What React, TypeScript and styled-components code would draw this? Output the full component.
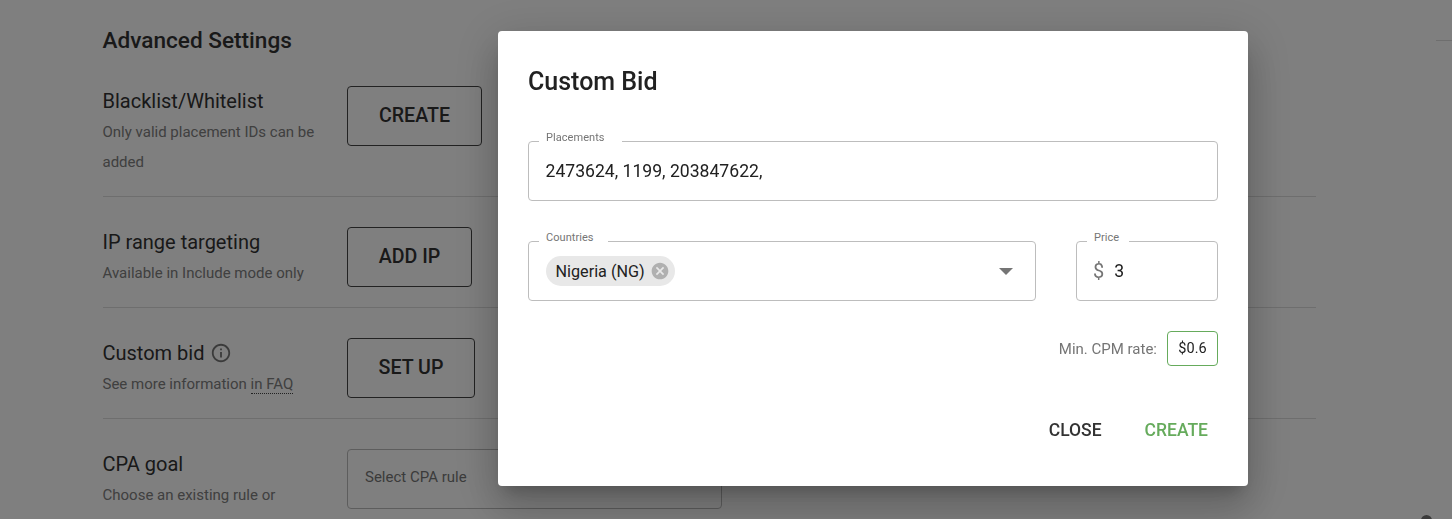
import styled, { createGlobalStyle } from "styled-components";
import { MdCancel, MdInfoOutline } from "react-icons/md";

const Global = createGlobalStyle`
  html, body {
    margin: 0;
    height: 100%;
    overflow: hidden;
    background: #fff;
    font-family: Roboto, "Liberation Sans", sans-serif;
  }
  * { box-sizing: border-box; }
`;

const Page = styled.div`
  height: 519px;
  overflow: hidden;
  padding: 24px 136px 0 102.5px;
`;

const Heading = styled.h2`
  margin: 0;
  font-size: 22.6px;
  font-weight: 500;
  line-height: 34px;
  height: 32px;
  color: #333;
`;

const Row = styled.section`
  display: flex;
  align-items: flex-start;
  padding: 30px 0 20px;
  & + & {
    border-top: 1px solid #ddd;
  }
`;

const RowText = styled.div`
  width: 244.5px;
  flex: none;
  padding-right: 25px;
`;

const RowTitle = styled.div`
  display: flex;
  align-items: center;
  gap: 5px;
  font-size: 20px;
  line-height: 30px;
  color: #333;
`;

const InfoIcon = styled(MdInfoOutline)`
  color: #777;
  font-size: 22px;
`;

const RowHint = styled.div`
  padding-top: 1px;
  margin-bottom: -1px;
  font-size: 15px;
  line-height: 30px;
  color: #808080;
`;

const FaqLink = styled.span`
  border-bottom: 1px dotted #444;
`;

const OutlineButton = styled.button<{ $width: number }>`
  width: ${p => p.$width}px;
  height: 60px;
  padding: 0 0 2px;
  background: transparent;
  border: 1px solid #444;
  border-radius: 4px;
  font: 500 19.6px Roboto, sans-serif;
  color: #333;
`;

const SelectBox = styled.div`
  display: flex;
  align-items: center;
  width: 375px;
  height: 60px;
  padding: 0 17px 4px;
  border: 1px solid #bbb;
  border-radius: 4px;
  font-size: 15px;
  color: #777;
`;

const EdgeLine = styled.div`
  position: absolute;
  top: 40px;
  right: 0;
  width: 16px;
  height: 1px;
  background: #ddd;
`;

const EdgeDot = styled.div`
  position: absolute;
  top: 515px;
  left: 1421px;
  width: 11px;
  height: 11px;
  border-radius: 50%;
  background: #777;
`;

const Backdrop = styled.div`
  position: fixed;
  inset: 0;
  display: flex;
  align-items: flex-start;
  padding: 31px 0 0 498px;
  background: rgba(0, 0, 0, 0.5);
`;

const Dialog = styled.div`
  display: flex;
  flex-direction: column;
  width: 750px;
  height: 455px;
  padding: 34px 30px 0;
  background: #fff;
  border-radius: 4px;
  box-shadow: 0 11px 15px -7px rgba(0, 0, 0, 0.2), 0 24px 38px 3px rgba(0, 0, 0, 0.14),
    0 9px 46px 8px rgba(0, 0, 0, 0.12);
`;

const DialogTitle = styled.h3`
  margin: 0 0 42px;
  font-size: 25px;
  font-weight: 500;
  line-height: 34px;
  color: #212121;
`;

const Field = styled.div<{ $width?: number }>`
  position: relative;
  display: flex;
  align-items: center;
  width: ${p => (p.$width ? `${p.$width}px` : "100%")};
  height: 60px;
  padding: 0 16.5px;
  border: 1px solid #bdbdbd;
  border-radius: 4px;
`;

const FloatLabel = styled.span<{ $gap: number }>`
  position: absolute;
  top: -11px;
  left: 10px;
  padding: 0 ${p => p.$gap}px 0 7px;
  background: #fff;
  font-size: 11px;
  line-height: 14px;
  letter-spacing: 0.05px;
  color: #757575;
`;

const FieldValue = styled.span`
  font-size: 17.6px;
  color: #212121;
`;

const FieldRow = styled.div`
  display: flex;
  gap: 40px;
  margin-top: 40px;
`;

const Chip = styled.div`
  display: flex;
  align-items: center;
  gap: 5px;
  height: 30px;
  padding: 0 5.5px 0 10px;
  border-radius: 15px;
  background: #e8e8e8;
  font-size: 16.2px;
  color: #212121;
`;

const ChipClear = styled(MdCancel)`
  color: #b0b0b0;
  font-size: 20px;
`;

const Caret = styled.svg`
  margin-left: auto;
  margin-right: 5.5px;
  width: 14px;
  height: 7px;
  fill: #757575;
`;

const Currency = styled.span`
  margin: 0 10px 0 -0.5px;
  font-size: 20px;
  color: #757575;
`;

const RateRow = styled.div`
  display: flex;
  align-items: center;
  justify-content: flex-end;
  gap: 10px;
  margin-top: 30px;
  font-size: 15px;
  color: #757575;
`;

const RateBox = styled.div`
  display: flex;
  align-items: center;
  justify-content: center;
  width: 51px;
  height: 35px;
  border: 1px solid #66ab5c;
  border-radius: 4px;
  font-size: 14.5px;
  color: #212121;
`;

const Actions = styled.div`
  display: flex;
  justify-content: flex-end;
  gap: 23px;
  margin-top: 44px;
`;

const TextButton = styled.button<{ $primary?: boolean }>`
  padding: 0 10px;
  height: 40px;
  background: none;
  border: 0;
  font: 500 17.5px Roboto, sans-serif;
  color: ${p => (p.$primary ? "#66ab5c" : "#333")};
`;

export default function App() {
  return (
    <>
      <Global />
      <Page>
        <Heading>Advanced Settings</Heading>
        <Row>
          <RowText>
            <RowTitle>Blacklist/Whitelist</RowTitle>
            <RowHint>Only valid placement IDs can be added</RowHint>
          </RowText>
          <OutlineButton $width={135}>CREATE</OutlineButton>
        </Row>
        <Row>
          <RowText>
            <RowTitle>IP range targeting</RowTitle>
            <RowHint>Available in Include mode only</RowHint>
          </RowText>
          <OutlineButton $width={125}>ADD IP</OutlineButton>
        </Row>
        <Row>
          <RowText>
            <RowTitle>
              Custom bid <InfoIcon />
            </RowTitle>
            <RowHint>
              See more information <FaqLink>in FAQ</FaqLink>
            </RowHint>
          </RowText>
          <OutlineButton $width={128}>SET UP</OutlineButton>
        </Row>
        <Row>
          <RowText>
            <RowTitle>CPA goal</RowTitle>
            <RowHint>Choose an existing rule or</RowHint>
          </RowText>
          <SelectBox>Select CPA rule</SelectBox>
        </Row>
      </Page>
      <EdgeLine />
      <EdgeDot />
      <Backdrop>
        <Dialog>
          <DialogTitle>Custom Bid</DialogTitle>
          <Field>
            <FloatLabel $gap={17}>Placements</FloatLabel>
            <FieldValue>2473624, 1199, 203847622,</FieldValue>
          </Field>
          <FieldRow>
            <Field $width={508}>
              <FloatLabel $gap={14}>Countries</FloatLabel>
              <Chip>
                Nigeria (NG)
                <ChipClear />
              </Chip>
              <Caret viewBox="0 0 14 7">
                <polygon points="0,0 14,0 7,7" />
              </Caret>
            </Field>
            <Field $width={142}>
              <FloatLabel $gap={10}>Price</FloatLabel>
              <Currency>$</Currency>
              <FieldValue>3</FieldValue>
            </Field>
          </FieldRow>
          <RateRow>
            Min. CPM rate:
            <RateBox>$0.6</RateBox>
          </RateRow>
          <Actions>
            <TextButton>CLOSE</TextButton>
            <TextButton $primary>CREATE</TextButton>
          </Actions>
        </Dialog>
      </Backdrop>
    </>
  );
}
